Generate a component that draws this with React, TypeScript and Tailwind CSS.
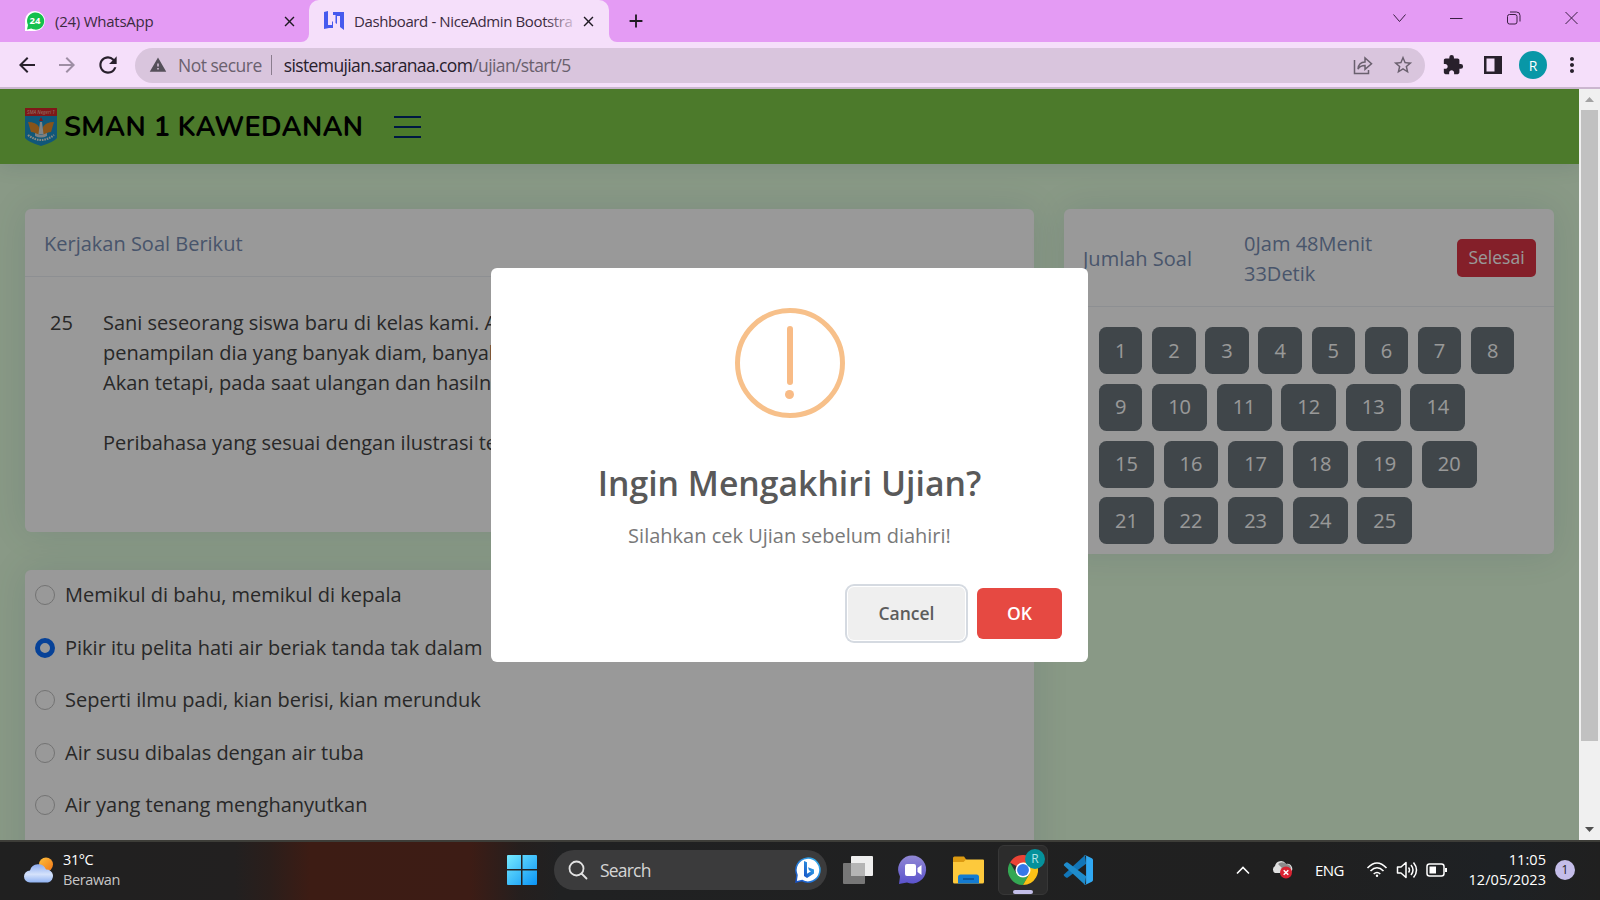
import React from "react";
import {
  MdAdd,
  MdArrowBack,
  MdArrowForward,
  MdClose,
  MdExtension,
  MdMoreVert,
  MdRefresh,
  MdStarBorder,
  MdWarning,
} from "react-icons/md";

const options = [
  "Memikul di bahu, memikul di kepala",
  "Pikir itu pelita hati air beriak tanda tak dalam",
  "Seperti ilmu padi, kian berisi, kian merunduk",
  "Air susu dibalas dengan air tuba",
  "Air yang tenang menghanyutkan",
];
const numbers = Array.from({ length: 25 }, (_, i) => i + 1);

function TabStrip() {
  return (
    <div className="flex h-[42px] shrink-0 bg-[#e49bf4] text-[#3b2b40]">
      <div className="flex w-[309px] items-center pl-6">
        <svg width="22" height="22" viewBox="0 0 22 22">
          <path d="M1 21V10a10 10 0 1 1 10 11z" fill="#fff" />
          <path d="M3 19.5l1-4.5a8.600 8.600 0 1 1 3.200 3.400z" fill="#14c04d" />
          <text x="11" y="14.300" fill="#fff" fontSize="9.500" fontWeight="700" textAnchor="middle" fontFamily="Open Sans, sans-serif">24</text>
        </svg>
        <span className="ml-[9px] text-[15px] tracking-[-0.25px]">(24) WhatsApp</span>
        <MdClose className="mr-[11px] ml-auto size-[17px] text-[#1f1a22]" />
      </div>
      <div className="relative flex w-[300px] items-center rounded-t-[10px] bg-[#f5dffa] pl-[15px]">
        <svg className="absolute bottom-0 -left-2" width="8" height="8"><path d="M8 0v8H0a8 8 0 0 0 8-8z" fill="#f5dffa" /></svg>
        <svg className="absolute -right-2 bottom-0" width="8" height="8"><path d="M0 0v8h8a8 8 0 0 1-8-8z" fill="#f5dffa" /></svg>
        <svg width="20" height="20" viewBox="0 0 20 20" fill="#4659ee">
          <path d="M0 1l4-1v14h4v-4l1 1v6H5l-5 1z" />
          <path d="M9 1h11v18l-4-3V5h-3v8l-1.500-1V4H9z" />
        </svg>
        <div className="relative ml-[10px] w-[219px] whitespace-nowrap text-[15px] tracking-[-0.39px]">
          Dashboard - NiceAdmin Bootstra
          <div className="absolute inset-y-0 right-0 w-7 bg-linear-to-r from-[#f5dffa00] to-[#f5dffacc]" />
        </div>
        <MdClose className="ml-[7px] size-[17px] text-[#1f1a22]" />
      </div>
      <MdAdd className="mt-[10px] ml-[16px] size-[22px] text-[#1f1a22]" />
      <div className="mt-[9px] mr-[19px] ml-auto flex gap-[37px] text-[#3a1f42]">
        <svg width="20" height="20" fill="none" stroke="currentColor"><path d="M3.500 5.500l6 7 6-7" /></svg>
        <svg width="20" height="20" fill="none" stroke="currentColor"><path d="M3 9.500h12.500" /></svg>
        <svg width="20" height="20" fill="none" stroke="currentColor"><rect x="3.500" y="5.500" width="9.500" height="9.500" rx="2" /><path d="M6 3h6.500q3.500 0 3.500 3.500V12.500" /></svg>
        <svg width="20" height="20" fill="none" stroke="currentColor"><path d="M4.500 3l12 12m0-12l-12 12" /></svg>
      </div>
    </div>
  );
}

function Toolbar() {
  return (
    <div className="flex h-[47px] shrink-0 items-center border-b-2 border-[#cbb6cf] bg-[#f5dffa] pt-px text-[#28202c]">
      <MdArrowBack className="ml-[15px] size-6" />
      <MdArrowForward className="ml-4 size-6 text-[#9e8ea4]" />
      <MdRefresh className="ml-[16px] size-[26px]" />
      <div className="ml-[14px] flex h-[35px] w-[1290px] items-center rounded-full bg-[#d9c5dd] pl-[14px] text-[17.5px] text-[#6a606e]">
        <MdWarning className="size-[18px] text-[#55505a]" />
        <span className="ml-[11px] tracking-[-0.5px]">Not secure</span>
        <span className="ml-[9px] h-5 w-px bg-[#8a7d8e]" />
        <span className="ml-[12px] tracking-[-0.62px]"><span className="text-[#28202c]">sistemujian.saranaa.com</span>/ujian/start/5</span>
        <svg className="mr-[19px] ml-auto" width="20" height="20" fill="none" stroke="#6a606e" strokeWidth="1.500">
          <path d="M1.500 5v13.500h14V15" /><path d="M5 14c.5-5 3-7 7-7V3l6.500 5.700L12 14.300V10.500c-3.500 0-5.500 1-7 3.500z" />
        </svg>
        <MdStarBorder className="mr-[11px] size-[22px]" />
      </div>
      <MdExtension className="ml-[17px] size-[22px]" />
      <svg className="ml-[20px]" width="18" height="18"><path fillRule="evenodd" d="M0 0h18v18H0zM2.500 2.500v13h8v-13z" fill="#28202c" /></svg>
      <div className="ml-[17px] flex size-[28px] items-center justify-center rounded-full bg-[#0897a7] text-[14px] text-white">R</div>
      <MdMoreVert className="ml-[13px] size-6" />
    </div>
  );
}

function SchoolLogo() {
  return (
    <svg width="32" height="38" viewBox="0 0 32 38">
      <path d="M0 4h32v26q-3 4-16 8Q3 34 0 30z" fill="#1c91ca" />
      <path d="M0 0h32v8H0z" fill="#d4282a" />
      <text x="16" y="5.800" fill="#f3c5b5" fontSize="4.800" fontStyle="italic" textAnchor="middle" fontFamily="Open Sans, sans-serif">SMA Negeri 1</text>
      <path d="M3 14q8 0 11 5v9q-4-4-8-4zM29 14q-8 0-11 5v9q4-4 8-4z" fill="#e38d2b" />
      <path d="M15 14h2l1.500 12h-5z" fill="#d5dde0" />
      <path d="M16 9l2 4h-4z" fill="#d4282a" />
      <path d="M10 25q6 3 12 0v3q-6 3-12 0z" fill="#cfd6da" />
      <path d="M3 27q13 10 26 0" fill="none" stroke="#e6e6d8" strokeWidth="2.200" strokeDasharray="1.600 .9" />
    </svg>
  );
}

function Page() {
  return (
    <div className="h-full overflow-hidden bg-[#e4ffdf] text-[20px] leading-[30px] text-[#444]">
      <header className="relative flex h-[75px] items-center bg-[#7fcc49] pl-[25px] shadow-[0_2px_20px_rgba(1,41,112,0.1)]">
        <SchoolLogo />
        <span className="ml-[7px] w-[310px] pt-[2px] font-[Nunito,Lato,sans-serif] text-[27px] font-bold tracking-[0.320px] whitespace-nowrap text-black">SMAN 1 KAWEDANAN</span>
        <svg className="ml-[19px]" width="29" height="24" stroke="#012970" strokeWidth="2"><path d="M1 2h27M1 12h27M1 22h27" /></svg>
      </header>
      <main className="flex items-start gap-[30px] pt-[45px] pl-[25px]">
        <div className="w-[1009px] shrink-0">
          <section className="h-[323px] rounded-[6px] bg-white shadow-[0_0_37px_rgba(1,41,112,0.1)]">
            <h2 className="h-[68px] border-b border-[#ebeef4] px-[19px] pt-[20px] text-[#798eb3]">Kerjakan Soal Berikut</h2>
            <div className="flex pt-[31px] pl-[25px]">
              <span className="w-[53px]">25</span>
              <p className="whitespace-nowrap">
                Sani seseorang siswa baru di kelas kami. A<br />
                penampilan dia yang banyak diam, banyak<br />
                Akan tetapi, pada saat ulangan dan hasilny<br /><br />
                Peribahasa yang sesuai dengan ilustrasi ter
              </p>
            </div>
          </section>
          <section className="mt-[38px] flex h-[330px] flex-col gap-[22.500px] rounded-[6px] bg-white pt-[10px] pl-[10px] shadow-[0_0_37px_rgba(1,41,112,0.1)]">
            {options.map((o, i) => (
              <label key={o} className="flex items-center">
                <span className={i === 1 ? "size-5 rounded-full border-[5.500px] border-[#0d6efd] bg-white" : "size-5 rounded-full border border-[#bfbfbf] bg-white"} />
                <span className="ml-[10px]">{o}</span>
              </label>
            ))}
          </section>
        </div>
        <section className="h-[345px] w-[490px] rounded-[6px] bg-white shadow-[0_0_37px_rgba(1,41,112,0.1)]">
          <div className="flex h-[98px] items-center border-b border-[#ebeef4] pl-[19px] text-[#798eb3]">
            <span className="w-[161px] pt-[2px]">Jumlah Soal</span>
            <span className="w-[150px] pt-[2px]">0Jam 48Menit 33Detik</span>
            <button className="ml-[63px] h-[38px] w-[79px] rounded-[5px] bg-[#dc3545] pb-px text-[17.5px] text-white">Selesai</button>
          </div>
          <div className="flex w-[456px] flex-wrap gap-x-[9.700px] gap-y-[9.800px] pt-[20px] pl-[35px]">
            {numbers.map((n) => (
              <button key={n} className="h-[47px] rounded-[7.5px] bg-[#6b757c] px-[16px] text-white">{n}</button>
            ))}
          </div>
        </section>
      </main>
    </div>
  );
}

function Modal() {
  return (
    <div className="absolute inset-0 bg-black/40 pt-[179px] pl-[491px]">
      <div className="flex h-[394px] w-[597px] flex-col items-center rounded-[6px] bg-white">
        <div className="mt-[40px] flex size-[110px] shrink-0 flex-col items-center rounded-full border-[5px] border-[#f7c08a]">
          <span className="mt-[13px] h-[59px] w-[6px] rounded-[3px] bg-[#f8bb86]" />
          <span className="mt-[4.500px] size-[9px] rounded-full bg-[#f8bb86]" />
        </div>
        <h1 className="mt-[42px] text-[33.75px] leading-[46px] font-semibold text-[#595959]">Ingin Mengakhiri Ujian?</h1>
        <p className="mt-[15px] text-[20px] leading-[30px] text-[#797979]">Silahkan cek Ujian sebelum diahiri!</p>
        <div className="mt-[36px] flex w-full items-center justify-end gap-[12px] pr-[26px] text-[17.5px] font-semibold">
          <button className="h-[53px] w-[117px] rounded-[6px] bg-[#efefef] text-[#5c5c5c] shadow-[0_0_0_1px_#fff,0_0_0_3px_#d5dae1]">Cancel</button>
          <button className="h-[51px] w-[85px] rounded-[6px] bg-[#e64942] text-white">OK</button>
        </div>
      </div>
    </div>
  );
}

function ChromeLogo() {
  return (
    <svg width="30" height="30" viewBox="0 0 48 48">
      <path d="M24 24L3.200 12A24 24 0 0 1 44.800 12z" fill="#ea4335" />
      <path d="M3.200 12L13.600 30 24 36l10.400-6L24 48A24 24 0 0 1 3.200 12z" fill="#34a853" />
      <path d="M34.400 30L24 48A24 24 0 0 0 44.800 12H24z" fill="#fbc116" />
      <circle cx="24" cy="24" r="12" fill="#fff" />
      <circle cx="24" cy="24" r="9.500" fill="#3478e8" />
    </svg>
  );
}

function Taskbar() {
  return (
    <footer className="flex h-[60px] shrink-0 items-center border-t-2 border-[#3d3d38] bg-[linear-gradient(90deg,#202020_0px,#222020_235px,#2b1e1b_270px,#3d1c14_310px,#3d1c15_470px,#251f1e_520px,#202122_560px,#202020_1300px,#1e2124_1500px,#202020_1600px)] pb-[2px] text-[14.500px] text-white">
      <svg className="ml-6" width="30" height="26" viewBox="0 0 30 26">
        <defs>
          <linearGradient id="sun" x2="1" y2="1"><stop stopColor="#ffc13c" /><stop offset="1" stopColor="#f07518" /></linearGradient>
          <linearGradient id="cloud" x2="0" y2="1"><stop stopColor="#8dacf1" /><stop offset=".55" stopColor="#d5e2fb" /><stop offset="1" stopColor="#91b3f3" /></linearGradient>
        </defs>
        <circle cx="22" cy="7.500" r="7" fill="url(#sun)" />
        <path d="M6 25.500a6 6 0 0 1 0-12 8.500 8.500 0 0 1 16-1 6.600 6.600 0 0 1 2 13z" fill="url(#cloud)" />
      </svg>
      <div className="ml-[9px] w-[444px] leading-[20px] tracking-[-0.4px]"><div>31°C</div><div className="text-[#c6c6c6]">Berawan</div></div>
      <svg width="30" height="30" viewBox="0 0 30 30">
        <defs><linearGradient id="win" x2="1" y2="1"><stop stopColor="#76eaff" /><stop offset="1" stopColor="#0a93f5" /></linearGradient></defs>
        <path d="M1 0h13v14H0V1q0-1 1-1zM15.500 0H29q1 0 1 1v13H15.500zM0 15.500h14V30H1q-1 0-1-1zM15.500 15.500H30V29q0 1-1 1H15.500z" fill="url(#win)" />
      </svg>
      <div className="ml-[17px] flex h-10 w-[273px] items-center rounded-full bg-[#3b3b3c] text-[17.5px]">
        <svg className="ml-[14px]" width="20" height="20" fill="none" stroke="#e2e2e2" strokeWidth="1.800"><circle cx="8.500" cy="8.500" r="7" /><path d="M13.500 13.500l5 5" strokeLinecap="round" /></svg>
        <span className="ml-[12px] tracking-[-0.8px] text-[#d5d5d5]">Search</span>
        <svg className="mr-[6px] ml-auto" width="26" height="26" viewBox="0 0 26 26">
          <defs><linearGradient id="bing" x1="1" x2="0" y2="1"><stop stopColor="#36b5ef" /><stop offset="1" stopColor="#174fc4" /></linearGradient></defs>
          <path d="M1 25l1-7a12 12 0 1 1 5 5.500z" fill="#fff" stroke="url(#bing)" strokeWidth="1.500" />
          <path d="M9 4l3 1.300v11.500l4-2.500-2-1-1-3 6 2.300v4l-7 4.500-3-2z" fill="url(#bing)" />
        </svg>
      </div>
      <svg className="ml-[16px]" width="30" height="30"><rect x="8" y="1" width="22" height="20" rx="1" fill="#eee" /><rect y="8" width="22" height="21" rx="1" fill="#777" /><path d="M8 8h14v13H8z" fill="#b5b5b5" /></svg>
      <svg className="ml-[25px]" width="30" height="30" viewBox="0 0 30 30">
        <defs><linearGradient id="chat" x2="0" y2="1"><stop stopColor="#9188d4" /><stop offset="1" stopColor="#5a52cc" /></linearGradient></defs>
        <path d="M1 29l1-7.500A14 14 0 1 1 9 27.500z" fill="url(#chat)" /><rect x="7" y="9" width="11" height="12" rx="2" fill="#fff" /><path d="M19.500 13l4-3v10l-4-3z" fill="#fff" />
      </svg>
      <svg className="ml-[25px]" width="31" height="30" viewBox="0 0 31 30">
        <path d="M0 3q0-1.500 1.500-1.500H11L13.500 5 12 8H0z" fill="#dc9a11" />
        <path d="M0 7h10.500L13 4.500h17q1 0 1 1V27q0 1.500-1.500 1.500h-28Q0 28.500 0 27z" fill="#fdc93c" />
        <path d="M5 28.500V22q0-2.500 2.500-2.500h16Q26 19.500 26 22v6.500z" fill="#147bd1" /><path d="M10 24h11" stroke="#0b4c91" strokeWidth="1.500" />
      </svg>
      <div className="relative ml-[14px] flex h-[50px] w-[50px] items-center justify-center rounded-[6px] border border-[#373737] bg-[#2c2c2c]">
        <ChromeLogo />
        <span className="absolute top-[3px] right-[2px] flex size-5 items-center justify-center rounded-full bg-[#05919b] text-[12px] text-[#b3e3e5]">R</span>
        <span className="absolute bottom-0 h-[4px] w-[20px] rounded-full bg-[#c3bfe9]" />
      </div>
      <svg className="ml-[15px]" width="30" height="30" viewBox="0 0 100 100">
        <path d="M73 1L4 64q-3 3 0 6l6 5q3 2 6 0L77 29z" fill="#1276b8" />
        <path d="M77 71L16 25q-3-2-6 0l-6 5q-3 3 0 6l69 63z" fill="#1f8ccc" />
        <path d="M75 1q-4-1-6 2 6-4 8 2v90q-2 6-8 2 2 3 6 2l21-10q4-2 4-6V17q0-4-4-6z" fill="#30a8f2" />
      </svg>
      <svg className="ml-auto" width="14" height="10" fill="none" stroke="#fff" strokeWidth="1.600"><path d="M1 8.500l6-6 6 6" /></svg>
      <svg className="ml-[21px]" width="22" height="20" viewBox="0 0 22 20">
        <path d="M4 13a4 4 0 0 1 0-7 6 6 0 0 1 11-2 5 5 0 0 1 4 9z" fill="#dfdfdf" /><path d="M7 4a5.500 5.500 0 0 1 8 0q4 0 5 4l-8 1z" fill="#8b8b8b" />
        <circle cx="15" cy="12.500" r="6" fill="#d92331" /><path d="M12.700 10.200l4.600 4.600m0-4.600l-4.600 4.600" stroke="#fff" strokeWidth="1.500" />
      </svg>
      <span className="ml-[22px] w-[51px] text-[15px] tracking-[-0.6px]">ENG</span>
      <svg width="22" height="18" fill="none" stroke="#fff" strokeWidth="1.600"><path d="M1.500 7q9.500-10 19 0M4.500 10q6.500-6.500 13 0M7.700 13q3.300-3 6.600 0" /><circle cx="11" cy="14.800" r="1.200" fill="#fff" stroke="none" /></svg>
      <svg className="ml-[8px]" width="22" height="18" fill="none" stroke="#fff" strokeWidth="1.500"><path d="M1.500 6h3.500L10 1.500v15L5 12H1.500z" strokeLinejoin="round" /><path d="M12.500 6.500q2 2.500 0 5M15 4q4 5 0 10M17.500 1.500q6 7.500 0 15" /></svg>
      <svg className="ml-[8px]" width="22" height="16" fill="none" stroke="#fff" strokeWidth="1.500"><rect x="1" y="2" width="17" height="12" rx="2.500" /><path d="M3.500 4.500H10v7H3.500z" fill="#fff" stroke="none" /><path d="M20 6v4" strokeWidth="2" /></svg>
      <div className="ml-[16px] w-[82px] text-right leading-[20px] tracking-[0.05px] whitespace-nowrap"><div>11:05</div><div>12/05/2023</div></div>
      <span className="mr-[25px] ml-[9px] flex size-5 items-center justify-center rounded-full bg-[#c4bde9] text-[12px] text-[#222]">1</span>
    </footer>
  );
}

export default function App() {
  return (
    <div className="flex h-[900px] w-[1600px] flex-col overflow-hidden font-['Open_Sans',sans-serif]">
      <TabStrip />
      <Toolbar />
      <div className="flex h-[751px]">
        <div className="relative w-[1579px] overflow-hidden"><Page /><Modal /></div>
        <div className="flex w-[21px] flex-col items-center bg-[#f0f0f0]">
          <svg className="my-[8px]" width="9" height="5"><path d="M0 5l4.500-5L9 5z" fill="#a3a3a3" /></svg>
          <div className="h-[631px] w-[17px] bg-[#c1c1c1]" />
          <svg className="mt-auto mb-[8px]" width="9" height="5"><path d="M0 0l4.500 5L9 0z" fill="#505050" /></svg>
        </div>
      </div>
      <Taskbar />
    </div>
  );
}
